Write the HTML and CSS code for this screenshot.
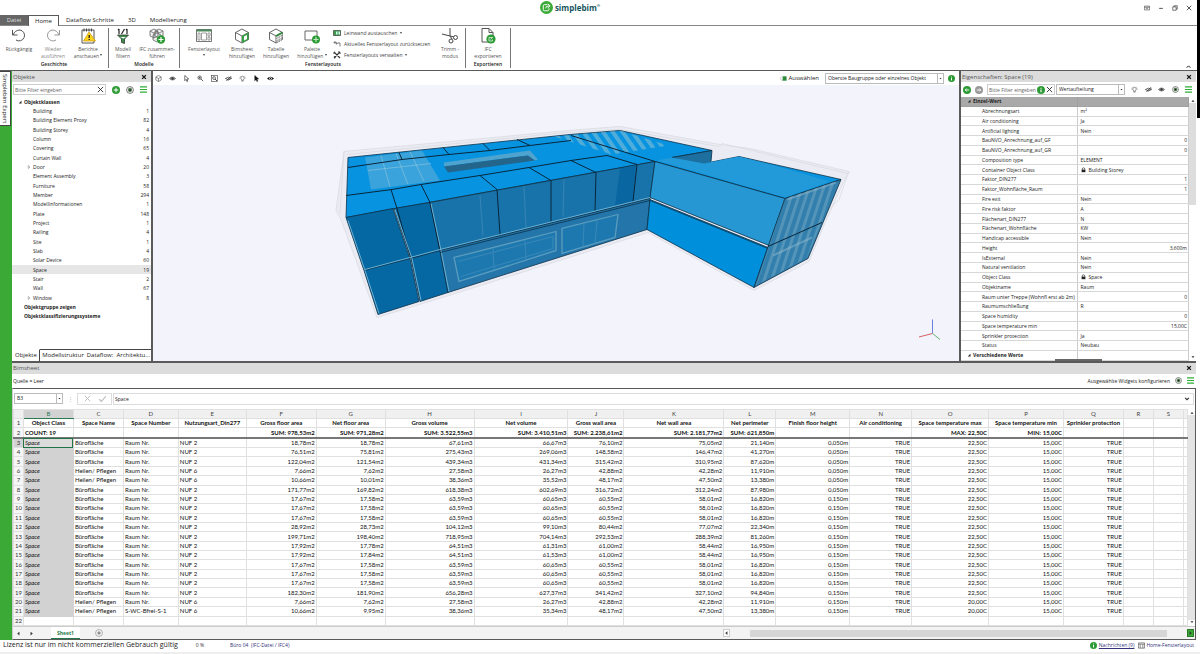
FILE: index.html
```html
<!DOCTYPE html>
<html lang="de">
<head>
<meta charset="utf-8">
<title>simplebim</title>
<link rel="stylesheet" href="styles.css">
</head>
<body>
<svg class="sprite" width="0" height="0" aria-hidden="true">
  <symbol id="i-eye" viewBox="0 0 16 16"><path d="M1 8Q8 1 15 8Q8 15 1 8Z" fill="#999" stroke="#555" stroke-width="1.5"/><circle cx="8" cy="8" r="2.6" fill="#333"/></symbol>
  <symbol id="i-eyeblack" viewBox="0 0 16 16"><path d="M0 8Q8 0 16 8Q8 16 0 8Z" fill="#111"/><circle cx="8" cy="8" r="3" fill="#fff"/><circle cx="8" cy="8" r="1.6" fill="#111"/></symbol>
  <symbol id="i-eyeoff" viewBox="0 0 16 16"><path d="M1 8Q8 2 15 8Q8 14 1 8ZM3 13L13 3M6 13L15 4" fill="none" stroke="#444" stroke-width="1.8"/></symbol>
  <symbol id="i-bulb" viewBox="0 0 16 16"><path d="M5.500 10a4 4 0 1 1 5 0v2h-5zM6 14h4M1 7h1.500M13.500 7H15M2.500 2l1.500 1.500M13.500 2L12 3.500" fill="none" stroke="#555" stroke-width="1.5"/></symbol>
  <symbol id="i-target" viewBox="0 0 16 16"><circle cx="8" cy="8" r="6.800" fill="#fff" stroke="#444" stroke-width="1.400"/><circle cx="8" cy="8" r="4.300" fill="#5d855d"/><circle cx="8" cy="8" r="1.700" fill="#111"/></symbol>
  <symbol id="i-menu" viewBox="0 0 16 16"><path d="M0 2h16M0 8h16M0 14h16" stroke="#2fae35" stroke-width="2.600"/></symbol>
  <symbol id="i-plus" viewBox="0 0 16 16"><circle cx="8" cy="8" r="8" fill="#2d9b35"/><path d="M8 3.500v9M3.500 8h9" stroke="#fff" stroke-width="2"/></symbol>
  <symbol id="i-info" viewBox="0 0 16 16"><circle cx="8" cy="8" r="8" fill="#2d9b35"/><path d="M8 7v5.500M8 3.500v2" stroke="#fff" stroke-width="2.200"/></symbol>
  <symbol id="i-x" viewBox="0 0 16 16"><path d="M2 2L14 14M14 2L2 14" stroke="currentColor" stroke-width="2" fill="none"/></symbol>
  <symbol id="i-xbold" viewBox="0 0 16 16"><path d="M3 3L13 13M13 3L3 13" stroke="#111" stroke-width="3.500" fill="none"/></symbol>
  <symbol id="i-down" viewBox="0 0 16 16"><path d="M2 5h12L8 12Z" fill="#333"/></symbol>
  <symbol id="i-up" viewBox="0 0 16 16"><path d="M2 11h12L8 4Z" fill="#222"/></symbol>
  <symbol id="i-left" viewBox="0 0 16 16"><path d="M11 2v12L4 8Z" fill="#333"/></symbol>
  <symbol id="i-right" viewBox="0 0 16 16"><path d="M5 2v12l7-6Z" fill="#333"/></symbol>
  <symbol id="i-cursor" viewBox="0 0 16 16"><path d="M4 1v12l3-3 2 5 2-1-2-5h4z" fill="#fff" stroke="#333" stroke-width="1.500"/></symbol>
  <symbol id="i-cursorblack" viewBox="0 0 16 16"><path d="M4 1v12l3-3 2 5 2-1-2-5h4z" fill="#111" stroke="#111"/></symbol>
  <symbol id="i-cube" viewBox="0 0 16 16"><path d="M8 1l6 3.500v7L8 15l-6-3.500v-7zM2 4.500l6 3.500 6-3.500M8 8v7" fill="#fff" stroke="#444" stroke-width="1.300"/></symbol>
  <symbol id="i-lens" viewBox="0 0 16 16"><circle cx="6" cy="6" r="4" fill="#eee" stroke="#444" stroke-width="1.600"/><path d="M4 6h4M6 4v4M9 9l5 5" stroke="#444" stroke-width="2"/></symbol>
  <symbol id="i-lensbox" viewBox="0 0 16 16"><rect x="1" y="1" width="14" height="14" fill="none" stroke="#444" stroke-width="1.400"/><circle cx="7" cy="7" r="3.300" fill="#eee" stroke="#444" stroke-width="1.600"/><path d="M9 9l5 5" stroke="#444" stroke-width="2.200"/></symbol>
  <symbol id="i-lock" viewBox="0 0 16 16"><path d="M4 8V5a4 4 0 0 1 8 0v3" fill="none" stroke="#222" stroke-width="2"/><rect x="2" y="7" width="12" height="8" fill="#222"/></symbol>
  <symbol id="i-fold" viewBox="0 0 16 16"><path d="M14 3v11H3z" fill="#222"/></symbol>
  <symbol id="i-unfold" viewBox="0 0 16 16"><path d="M5 2l7 6-7 6z" fill="#fff" stroke="#777" stroke-width="2"/></symbol>
  <symbol id="i-logo" viewBox="0 0 16 16"><circle cx="8" cy="8" r="8" fill="#3aa935"/><path d="M9 4.500H5.500Q4 4.500 4 6v4.500Q4 12 5.500 12h4Q11 12 11 10.500V9M7 9q0-3 4-3M9.500 3.500L12.500 6l-3 2.500" fill="none" stroke="#fff" stroke-width="1.200"/></symbol>
</svg>

<div class="app">
  <header class="titlebar">
    <div class="brand"><svg class="brand-mark"><use href="#i-logo"/></svg><span>simplebim<sup>®</sup></span></div>
    <div class="winctl">
      <button aria-label="Menüband"><svg viewBox="0 0 16 16"><path d="M1 3h14v10H1zM1 6h14M8 7.500v4M6 9.500l2-2 2 2" fill="none" stroke="#333" stroke-width="1.500"/></svg></button>
      <button aria-label="Minimieren"><svg viewBox="0 0 16 16"><path d="M3 9h10" stroke="#222" stroke-width="2"/></svg></button>
      <button aria-label="Verkleinern"><svg viewBox="0 0 16 16"><path d="M2 5h9v9H2zM5 5V2h9v9h-3" fill="none" stroke="#222" stroke-width="1.600"/></svg></button>
      <button aria-label="Schließen"><svg viewBox="0 0 16 16"><use href="#i-x"/></svg></button>
    </div>
  </header>

  <nav class="tabs">
    <button class="tab file">Datei</button>
    <button class="tab active">Home</button>
    <button class="tab">Dataflow Schritte</button>
    <button class="tab">3D</button>
    <button class="tab">Modellierung</button>
  </nav>

  <div class="ribbon">
    <section class="group">
      <div class="tools">
        <button class="tool w36"><svg viewBox="0 0 16 16"><path d="M1.500 2v5h5M2 7Q4 2 9 2a5.500 5.500 0 1 1-4 10" fill="none" stroke="#555"/></svg><span>Rückgängig</span></button>
        <button class="tool w32 off"><svg viewBox="0 0 16 16"><path d="M14.500 2v5h-5M14 7Q12 2 7 2a5.500 5.500 0 1 0 4 10" fill="none" stroke="#999"/></svg><span>Wieder<br>ausführen</span></button>
        <button class="tool w38"><svg viewBox="0 0 16 16"><path d="M2 2h12v13H2z" fill="#fff" stroke="#555"/><path d="M4 .5v3M6.500 .5v3M9 .5v3M11.500 .5v3M4 12h4" stroke="#444"/><path d="M9 4l6.500 9h-12z" fill="#ffd21f" stroke="#c89a00" stroke-width=".7"/><path d="M9.200 7v3M9.200 11v1" stroke="#222" stroke-width="1.300"/></svg><span>Berichte<br>anschauen <i class="caret"></i></span></button>
      </div>
      <h2>Geschichte</h2>
    </section>
    <section class="group">
      <div class="tools">
        <button class="tool w26"><svg viewBox="0 0 16 16"><path d="M2.500 7h11L9.500 11v4.500l-3-1V11z" fill="#3c8f4a" stroke="#333" stroke-width=".8"/><path d="M5 9h6L8.500 10.500z" fill="#fff"/><path d="M4 1v5M6.500 6l3-5M12 1v5M3 2l1-1M11 2l1-1" stroke="#222" stroke-width="1.200" fill="none"/></svg><span>Modell<br>filtern</span></button>
        <button class="tool w42"><svg viewBox="0 0 16 16"><path d="M5 1l4 2v5L5 10 1 8V3zM1 3l4 2 4-2M5 5v5M10 1l4 2v5l-4 2-4-2V3zM6 3l4 2 4-2M8 5l4 2v5l-4 2-4-2V7z" fill="#eee" stroke="#666" stroke-width=".8"/><circle cx="12" cy="11.500" r="4.200" fill="#2d9b35"/><path d="M12 9v5M9.500 11.500h5" stroke="#fff" stroke-width="1.200"/></svg><span>IFC zusammen-<br>führen</span></button>
      </div>
      <h2>Modelle</h2>
    </section>
    <section class="group wide">
      <div class="tools">
        <button class="tool w42"><svg viewBox="0 0 16 16"><path d="M.5 1.500h15v12H.5z" fill="#fff" stroke="#777"/><path d="M.5 1.500h15v2H.5z" fill="#4d8a5d"/><path d="M2 5h2v7H2zM5.500 5h5v7h-5zM12 5h2v3h-2zM12 9h2v3h-2z" fill="#fff" stroke="#888" stroke-width=".8"/></svg><span>Fensterlayout<br><i class="caret"></i></span></button>
        <button class="tool w34"><svg viewBox="0 0 16 16"><path d="M8 1l6.500 3.500v7L8 15l-6.500-3.500v-7zM1.500 4.500L8 8l6.500-3.500M8 8v7" fill="#fff" stroke="#555" stroke-width=".9"/><path d="M8 8l6.500-3.500v7L8 15z" fill="#35a043"/><path d="M10 8.500l3-1.500v4l-3 1.500z" fill="#fff"/></svg><span>Bimsheet<br>hinzufügen</span></button>
        <button class="tool w34"><svg viewBox="0 0 16 16"><path d="M8 1l6.500 3.500v7L8 15l-6.500-3.500v-7zM1.500 4.500L8 8l6.500-3.500M8 8v7" fill="#fff" stroke="#555" stroke-width=".9"/><path d="M8 8l6.500-3.500v7L8 15z" fill="#999"/><path d="M8 9.500L14.500 6M10 8v6M12.300 7v6M8 12l6.500-3.500" stroke="#fff" stroke-width=".7"/><path d="M8 8l6.500-3.500" stroke="#2d8a3a" stroke-width="1.600"/></svg><span>Tabelle<br>hinzufügen</span></button>
        <button class="tool w38"><svg viewBox="0 0 16 16"><path d="M1 3h12v9H1z" fill="#fff" stroke="#666"/><circle cx="12" cy="11.500" r="4" fill="#2d9b35"/><path d="M12 9v5M9.500 11.500h5" stroke="#bfe6c2" stroke-width="1.200"/></svg><span>Palette<br>hinzufügen <i class="caret"></i></span></button>
        <div class="stack">
          <button><svg viewBox="0 0 16 16"><path d="M1 3h14v10H1z" fill="#3d9b4a" stroke="#444" stroke-width="1.500"/><path d="M6 5h3v6H6zM11 5h3v6h-3z" fill="#cfe" /></svg>Leinwand austauschen <i class="caret"></i></button>
          <button><svg viewBox="0 0 16 16"><path d="M5 2L2 5l3 3M2 5h5v4M10 5l-2 3M10 6h4v7" fill="none" stroke="#555" stroke-width="1.500"/></svg>Aktuelles Fensterlayout zurücksetzen</button>
          <button><svg viewBox="0 0 16 16"><path d="M2 2l12 12M14 2L2 14M1 5l3-3M11 1l4 4M2 11l3 3" stroke="#333" stroke-width="2.200"/></svg>Fensterlayouts verwalten <i class="caret"></i></button>
        </div>
        <button class="tool w26"><svg viewBox="0 0 16 16"><path d="M8 0v8l2 3M0 6l12 3" stroke="#444" fill="none"/><circle cx="13.500" cy="9.500" r="2" fill="#fff" stroke="#444"/><circle cx="9" cy="13" r="2" fill="#fff" stroke="#444"/></svg><span>Trimm -<br>modus</span></button>
      </div>
      <h2>Fensterlayouts</h2>
    </section>
    <section class="group">
      <div class="tools">
        <button class="tool w42"><svg viewBox="0 0 16 16"><path d="M2 .5h7l4 4V14H2z" fill="#fff" stroke="#555"/><path d="M9 .5v4h4" fill="none" stroke="#555"/><circle cx="11" cy="11" r="4.600" fill="#2d9b35"/><path d="M12 9.500H9v3.500h3.500v-1.500M10.500 11.500l2.500-2.500" stroke="#cfe8d0" stroke-width=".9" fill="none"/></svg><span>IFC<br>exportieren</span></button>
      </div>
      <h2>Exportieren</h2>
    </section>
    <button class="collapse" aria-label="Menüband einklappen"><svg viewBox="0 0 16 16"><path d="M2 12l6-6 6 6" fill="none" stroke="#111" stroke-width="3"/></svg></button>
  </div>

  <div class="work">
    <aside class="rail"><button>Simplebim Expert</button></aside>
    <div class="panes">
      <div class="upper">
        <section class="panel objects">
          <div class="caption"><span>Objekte</span><button aria-label="Objekte schließen"><svg><use href="#i-xbold"/></svg></button></div>
          <div class="filterbar">
            <div class="field"><input aria-label="Filter" placeholder="Bitte Filter eingeben"><svg class="ic"><use href="#i-x"/></svg></div>
            <svg class="ic big"><use href="#i-plus"/></svg><svg class="ic big"><use href="#i-target"/></svg><svg class="ic"><use href="#i-menu"/></svg>
          </div>
          <ul class="tree" id="tree"></ul>
          <div class="subtabs"><button class="on">Objekte</button><button>Modellstruktur</button><button>Dataflow:</button><button>Architektu...</button></div>
        </section>

        <section class="viewer">
          <div class="viewbar">
            <div class="viewtools">
              <svg class="ic"><use href="#i-cube"/></svg><svg class="ic"><use href="#i-eye"/></svg><svg class="ic"><use href="#i-cursor"/></svg><svg class="ic"><use href="#i-lens"/></svg><svg class="ic"><use href="#i-lensbox"/></svg><svg class="ic"><use href="#i-eyeoff"/></svg><svg class="ic"><use href="#i-bulb"/></svg><svg class="ic"><use href="#i-cursorblack"/></svg><svg class="ic"><use href="#i-eyeblack"/></svg>
            </div>
            <label class="pick" for="level"><svg class="ic" viewBox="0 0 16 16"><path d="M5 4a4 4 0 0 0 0 8h3" fill="none" stroke="#999"/><rect x="6" y="3" width="9" height="10" fill="#2d8a3a"/></svg>Auswählen</label>
            <div class="combo level"><select id="level"><option>Oberste Baugruppe oder einzelnes Objekt</option></select><svg><use href="#i-down"/></svg></div>
            <svg class="ic"><use href="#i-info"/></svg>
          </div>
          <svg class="scene" viewBox="153 86 806 275" role="img" aria-label="Gebäudemodell">
            <defs>
              <pattern id="stripes" width="7" height="10" patternUnits="userSpaceOnUse" patternTransform="rotate(18)"><rect width="3" height="10" fill="#86b4c8" opacity=".4"/></pattern>
              <pattern id="slats" width="8" height="10" patternUnits="userSpaceOnUse" patternTransform="rotate(-35)"><rect width="4" height="10" fill="#a9cdd6" opacity=".45"/></pattern>
            </defs>
            <g fill="#e4e4ea" fill-opacity=".5" stroke="#d8d8de" stroke-width=".7">
              <path d="M344 152L568 131 620 127 720 145 750 149 849 172 842 186 823 228 809 262 754 291 648 233 449 296 377 318 341 220 336 211Z"/>
              <path d="M347 155L566 133 620 130 719 147 722 144 848 174" fill="none"/>
              <path d="M344 152L340 214M849 172L839 200 825 214" fill="none"/>
            </g>
            <g stroke="#0b3048" stroke-width=".8" stroke-linejoin="round">
              <path fill="#0793df" d="M346 218L348 158 570 135 620 131 712 151 672 158 704 164 739 157 841 180 785 199 655 162Z"/>
              <path fill="#1d6f9f" stroke="none" d="M672 158L712 151 711 163 704 165Z"/>
              <path fill="none" d="M672 158L712 151 711 162"/>
              <path fill="#229ad9" stroke="none" d="M657 161L672 158 704 164 739 157 785 169 830 182 785 198Z"/>
              <path fill="#0568a3" d="M346 218L393 209 410 259 364 271Z"/>
              <path fill="#0568a3" d="M394 209L430 203 440 251 411 259Z"/>
              <path fill="#0568a3" d="M364 271L410 259 419 302 378 315Z"/>
              <path fill="#0568a3" d="M411 259L440 251 448 293 420 302Z"/>
              <path fill="#1873aa" d="M430 203L655 162 650 199 440 251Z"/>
              <path fill="#2375aa" d="M440 251L650 199 647 230 448 293Z"/>
              <path fill="#0a66a0" stroke="none" d="M620 169L636 166 633 202 615 206Z"/>
              <path fill="#2697d2" d="M655 162L785 199 769 246 650 198Z"/>
              <path fill="#008fdb" d="M650 200L768 248 754 288 647 230Z"/>
              <path fill="#327fad" d="M785 199L841 180 808 259 754 288 768 247Z"/>
            </g>
            <path fill="url(#stripes)" d="M785 199L839 181 807 258 756 286 769 247Z"/>
            <g fill="none" stroke="#a5c6d4" stroke-opacity=".4" stroke-width="2"><path d="M787 200L836 183M773 256L812 238"/></g>
            <path fill="#6fb4d8" fill-opacity=".5" d="M365 158L422 151 440 181 371 190Z"/>
            <g fill="none" stroke="#9fcde0" stroke-opacity=".5" stroke-width="1"><path d="M381 156L390 187M396 154L408 185M410 152L424 182M368 171L431 164"/></g>
            <path fill="url(#slats)" d="M554 137L620 131 668 146 612 155Z"/>
            <path fill="#4ea4cf" d="M444 163L530 151 538 160 530 162 528 156 444 167Z"/>
            <path fill="#24658c" d="M444 167L528 156 535 161 448 173Z"/>
            <g fill="none" stroke="#08263c" stroke-width="1">
              <path d="M348 168L402 160 449 155 490 151 530 146 571 141M346 196L392 190 421 185 480 176 529 168 571 161 607 156"/>
              <path d="M399 153L402 160M443 148L449 155M483 144L490 151M517 140L530 146M571 136L655 162"/>
              <path d="M391 190L397 209 411 259M421 185L430 203 440 251M480 176L497 190M529 168L551 181M571 161L596 173M607 156L637 165"/>
              <path d="M497 190L500 235M551 181L551 222M596 173L595 211M637 165L633 202M768 247L822 223"/>
            </g>
            <g fill="none" stroke="#6ab0d2" stroke-width="1">
              <path d="M348 221L365 271 379 314M365 270L440 250 650 198M395 210L412 259 421 301M431 204L441 251 449 292"/>
            </g>
            <path d="M440 253L650 201 768 249" fill="none" stroke="#0b3048" stroke-width=".8"/>
            <g fill="#1d78b0" stroke="#5a9cbe" stroke-width="1.300">
              <path d="M454 258L556 232 556 251 459 282Z"/><path d="M562 229L618 215 615 238 562 254Z"/>
            </g>
            <g fill="none" stroke="#5a9cc0" stroke-opacity=".4" stroke-width="1.200"><path d="M458 262L553 237 553 249 461 277M493 249L494 270M525 241L526 260M584 224L583 247M597 221L595 244M480 196L483 236M524 187L526 228M564 180L563 217"/></g>
            <path d="M932.500 320V334" stroke="#6a7fe0"/><path d="M932.500 334L919 337.500" stroke="#d46060"/><path d="M932.500 334L940 340" stroke="#5fb86c"/>
          </svg>
        </section>

        <section class="panel props">
          <div class="caption"><span>Eigenschaften: Space (19)</span><button aria-label="Eigenschaften schließen"><svg><use href="#i-xbold"/></svg></button></div>
          <div class="filterbar">
            <svg class="ic big" viewBox="0 0 16 16"><circle cx="8" cy="8" r="8" fill="#2d9b35"/><path d="M12.500 8h-8M7.500 5L4.500 8l3 3" fill="none" stroke="#fff" stroke-width="1.800"/></svg>
            <svg class="ic big" viewBox="0 0 16 16"><circle cx="8" cy="8" r="8" fill="#999"/><path d="M3.500 8h8M8.500 5l3 3-3 3" fill="none" stroke="#fff" stroke-width="1.800"/></svg>
            <div class="field"><input aria-label="Filter" placeholder="Bitte Filter eingeben"><svg class="ic big"><use href="#i-info"/></svg><svg class="ic"><use href="#i-x"/></svg></div>
            <div class="combo"><select aria-label="Ansicht"><option>Wertaufteilung</option></select><svg><use href="#i-down"/></svg></div>
            <div class="icons"><svg class="ic"><use href="#i-bulb"/></svg><svg class="ic"><use href="#i-eyeoff"/></svg><svg class="ic"><use href="#i-eye"/></svg><svg class="ic"><use href="#i-target"/></svg><svg class="ic"><use href="#i-menu"/></svg></div>
          </div>
          <div class="propbody">
            <table class="proptable"><colgroup><col class="pname"><col></colgroup><tbody id="props"></tbody></table>
            <div class="vscroll"><svg><use href="#i-up"/></svg><i class="thumb"></i><svg><use href="#i-down"/></svg></div>
          </div>
          <i class="grip"></i>
        </section>
      </div>

      <section class="bimsheet">
        <div class="caption"><span>Bimsheet</span><button aria-label="Bimsheet schließen"><svg><use href="#i-xbold"/></svg></button></div>
        <div class="source"><span>Quelle = Leer</span><span class="config">Ausgewählte Widgets konfigurieren</span><svg class="ic"><use href="#i-target"/></svg><svg class="ic"><use href="#i-menu"/></svg></div>
        <div class="book">
          <div class="formula">
            <div class="combo cellname"><select aria-label="Zelle"><option>B3</option></select><svg><use href="#i-down"/></svg></div>
            <span class="dots">⋮</span>
            <div class="okcancel"><svg viewBox="0 0 16 16"><path d="M3 3l10 10M13 3L3 13" stroke="#bbb" stroke-width="1.600"/></svg><svg viewBox="0 0 16 16"><path d="M2 9l4 4 8-9" fill="none" stroke="#bbb" stroke-width="2"/></svg></div>
            <div class="fx"><input aria-label="Formel" value="Space"><svg viewBox="0 0 16 16"><path d="M3 5l5 5 5-5" fill="none" stroke="#333" stroke-width="3"/></svg></div>
          </div>
          <div class="gridwrap">
            <table class="grid" id="grid"></table>
            <div class="vscroll"><svg><use href="#i-up"/></svg><i class="thumb"></i><svg><use href="#i-down"/></svg></div>
          </div>
          <div class="sheetbar">
            <svg class="arr"><use href="#i-left"/></svg><svg class="arr"><use href="#i-right"/></svg>
            <button class="sheet">Sheet1</button>
            <button class="add" aria-label="Neues Blatt"><svg viewBox="0 0 16 16"><circle cx="8" cy="8" r="7" fill="none" stroke="#777"/><path d="M8 4.500v7M4.500 8h7" stroke="#666" stroke-width="1.800"/></svg></button>
            <div class="hscroll"><svg><use href="#i-left"/></svg><i></i><svg class="end"><use href="#i-right"/></svg></div>
          </div>
        </div>
      </section>
    </div>
  </div>

  <footer class="status">
    <span class="licence">Lizenz ist nur im nicht kommerziellen Gebrauch gültig</span>
    <span class="pct">0 %</span>
    <span class="file">Büro 04&nbsp; (IFC-Datei / IFC4)</span>
    <svg class="ic"><use href="#i-info"/></svg><a href="#">Nachrichten (9)</a>
    <svg class="ic lay" viewBox="0 0 16 16"><path d="M1 2h14v12H1zM1 5h14M5 5v9M11 5v9" fill="none" stroke="#555" stroke-width="1.500"/></svg><span class="file">Home-Fensterlayout</span>
  </footer>
  <i class="edge"></i>
</div>
<script src="app.js"></script>
</body>
</html>
```

FILE: styles.css
```css
:root {
  --ui: "Open Sans", "Noto Sans", sans-serif;
  --sheet: Lato, "Open Sans", sans-serif;
  --line: #5a5a5a;
  --green: #3aa935;
  --cap: #dcdcdc;
}
* { box-sizing: border-box; }
body { margin: 0; background: #fff; color: #222; font: 5px/8px var(--ui); }
button, input, select { font: inherit; color: inherit; border: 0; margin: 0; padding: 0; background: none; border-radius: 0; }
input, select { outline: 0; min-width: 0; width: 100%; }
select { appearance: none; }
svg { display: block; flex: none; }
h2 { margin: 0; font: 600 5px/8px var(--ui); color: #222; text-align: center; }
.sprite { position: absolute; }
.ic { width: 7px; height: 7px; }
.ic.big { width: 8px; height: 8px; }
.app { min-height: 100vh; display: flex; flex-direction: column; position: relative; }
.edge { position: absolute; top: 0; right: 0; width: 3px; height: 118px; background: #000; }

.titlebar { height: 15px; display: grid; grid-template-columns: 9fr auto 10fr; align-items: center; }
.brand { grid-column: 2; display: flex; align-items: center; gap: 2px; font: 700 8px/12px var(--ui); color: #14535c; }
.brand-mark { width: 13px; height: 13px; }
.brand sup { font-size: 4px; line-height: 1px; vertical-align: 4px; }
.winctl { display: flex; justify-content: flex-end; gap: 8px; padding-right: 8px; }
.winctl svg { width: 6px; height: 6px; }

.tabs { height: 11px; display: flex; font-size: 6px; border-bottom: 1px solid #888; }
.tab { padding: 0 7px; line-height: 9px; }
.tab.file { background: #666; color: #ddd; width: 28px; padding: 0; }
.tab.active { background: #fff; border: 1px solid var(--line); border-bottom: 0; width: 31px; padding: 0; margin-bottom: -1px; }

.ribbon { height: 45px; display: flex; border-bottom: 1px solid var(--line); position: relative; padding-top: 2px; }
.group { border-right: 1px solid #777; margin-bottom: 2px; padding: 0 1px; display: flex; flex-direction: column; }
.group.wide { padding: 0 2px 0 3px; }
.tools { display: flex; flex: 1; }
.tool { display: flex; flex-direction: column; align-items: center; gap: 2px; color: #555; line-height: 7px; white-space: nowrap; }
.tool svg { width: 16px; height: 16px; }
.tool.off { color: #888; }
.w26 { width: 26px; }
.w32 { width: 32px; }
.w34 { width: 34px; }
.w36 { width: 36px; }
.w38 { width: 38px; }
.w42 { width: 42px; }
.caret { display: inline-block; border: 1px solid transparent; border-top: 2px solid #444; vertical-align: 1px; }
.stack { display: flex; flex-direction: column; gap: 3px; padding: 1px 2px 0; width: 106px; color: #444; }
.stack button { display: flex; align-items: center; gap: 3px; white-space: nowrap; }
.stack svg { width: 8px; height: 8px; }
.collapse { position: absolute; right: 9px; bottom: 1px; }
.collapse svg { width: 5px; height: 5px; }

.work { flex: 1; display: flex; }
.rail { width: 12px; background: var(--green); flex: none; }
.rail button { writing-mode: vertical-rl; width: 11px; height: 55px; background: #fff; border: 1px solid #444; border-left: 0; font-size: 6px; }
.panes { flex: 1; min-width: 0; display: flex; flex-direction: column; margin-right: 4px; }
.upper { flex: 291 1 0; display: flex; border-bottom: 2px solid var(--line); }
.caption { height: 11px; flex: none; background: var(--cap); display: flex; align-items: center; justify-content: space-between; padding: 0 4px 0 1px; font-size: 6px; color: #555; }
.caption svg { width: 6px; height: 6px; }
.panel { display: flex; flex-direction: column; flex: none; position: relative; }
.filterbar { height: 15px; flex: none; display: flex; align-items: center; gap: 6px; padding: 0 4px 0 1px; }
.field { border: 1px solid #ccc; height: 11px; display: flex; align-items: center; padding: 0 1px; gap: 1px; flex: 1; }
.field input::placeholder { color: #666; opacity: 1; }
.combo { display: flex; align-items: center; border: 1px solid #bbb; height: 11px; background: #fff; }
.combo select { flex: 1; padding-left: 2px; height: 9px; line-height: 9px; }
.combo svg { width: 6px; height: 9px; padding: 3px 1px; border-left: 1px solid #bbb; }

.objects { width: 141px; border-right: 2px solid var(--line); }
.tree { list-style: none; margin: 0; padding: 0; flex: 1; display: grid; grid-template-rows: repeat(27, 1fr); }
.tree li { display: flex; align-items: center; padding: 0 2px 0 15px; line-height: 8px; }
.tree svg, .tree i { width: 4px; height: 4px; margin-right: 2px; flex: none; }
.tree .count { margin-left: auto; }
.tree li.top { font-weight: 700; padding-left: 6px; }
.tree li.sel { background: #e6e6e6; }
.subtabs { height: 12px; display: flex; font-size: 6px; flex: none; }
.subtabs button { border-top: 1px solid #444; padding: 0 2px; white-space: nowrap; min-width: 0; }
.subtabs .on { border-top-color: #fff; border-right: 1px solid #444; padding: 0 3px; }

.viewer { flex: 1; min-width: 0; display: flex; flex-direction: column; background: #f3f3fc; }
.viewbar { height: 14px; flex: none; background: #fff; display: flex; align-items: center; padding: 0 4px 0 2px; gap: 4px; }
.viewtools { flex: 1; display: flex; gap: 7px; }
.pick { display: flex; align-items: center; gap: 1px; font-size: 6px; }
.level { width: 119px; margin-left: 2px; }
.scene { flex: 1; width: 100%; min-height: 0; }

.props { width: 237px; border-left: 2px solid var(--line); }
.props .filterbar { gap: 4px; padding-left: 2px; }
.props .field { flex: none; width: 68px; }
.props .combo { width: 69px; margin-left: -3px; }
.props .icons { flex: 1; display: flex; justify-content: space-between; padding-left: 2px; }
.propbody { flex: 1; display: grid; grid-template-columns: 1fr 7px; }
.proptable { border-collapse: collapse; table-layout: fixed; width: 100%; height: 100%; }
.pname { width: 51%; }
.proptable th, .proptable td { padding: 0 1px 0 3px; border-bottom: 1px solid #d8d8d8; border-right: 1px solid #ccc; text-align: left; font-weight: 400; line-height: 8px; white-space: nowrap; }
.proptable th { padding-left: 21px; }
.proptable .sect th { font-weight: 700; padding-left: 6px; }
.proptable .dark > * { background: #a9a9a9; border-color: #a0a0a0; }
.proptable .num { text-align: right; }
.proptable svg { display: inline-block; width: 5px; height: 6px; margin-right: 3px; vertical-align: -1px; }
.proptable .sect svg { width: 4px; height: 4px; margin-right: 2px; vertical-align: 0; }
.vscroll { background: #fff; display: flex; flex-direction: column; align-items: center; justify-content: space-between; padding: 2px 0; }
.vscroll svg { width: 4px; height: 4px; }
.vscroll .thumb { width: 100%; background: #ddd; flex: 1; }
.props .thumb { flex: none; height: 102px; margin-bottom: auto; }
.grip { position: absolute; bottom: 0; left: 94px; width: 47px; height: 2px; background: #666; }

.bimsheet { flex: 278 1 0; display: flex; flex-direction: column; }
.source { height: 14px; flex: none; display: flex; align-items: center; gap: 5px; padding: 0 2px 0 1px; }
.config { margin-left: auto; }
.book { flex: 1; display: flex; flex-direction: column; border: 1px solid var(--line); border-left-color: #ccc; }
.formula { flex: none; display: flex; align-items: center; height: 20px; padding: 0 1px; }
.cellname { width: 49px; }
.dots { width: 14px; text-align: center; color: #aaa; }
.okcancel { display: flex; gap: 6px; border: 1px solid #ddd; height: 12px; width: 35px; padding: 0 5px; align-items: center; }
.okcancel svg { width: 9px; height: 9px; }
.fx { flex: 1; display: flex; align-items: center; border: 1px solid #ddd; height: 12px; margin-left: 1px; padding: 0 3px 0 1px; }
.fx svg { width: 6px; height: 6px; }
.gridwrap { flex: 1; display: grid; grid-template-columns: 1fr 7px; }
.grid { border-collapse: collapse; table-layout: fixed; width: 100%; height: 100%; font: 6px/8px var(--sheet); color: #111; }
.grid th, .grid td { padding: 0 1px; border: 1px solid #e0e0e0; white-space: nowrap; overflow: hidden; text-align: left; font-weight: 400; }
.grid thead th { background: #f0f0f0; text-align: center; color: #444; }
.grid tbody th { text-align: center; color: #333; background: #f6f6f6; padding: 0; }
.grid .title td { font-weight: 700; text-align: center; overflow: visible; }
.grid .sum td { font-weight: 700; }
.grid .sum > * { border-bottom: 2px solid #777; }
.grid td.num { text-align: right; }
.grid .col-b { background: #d2d2d2; border-color: #d2d2d2; font-style: italic; }
.grid thead .picked { background: #d2d2d2; color: #2a7a52; border-bottom: 1px solid #2a7a52; }
.grid tbody th.picked { background: #d2d2d2; }
.grid td.cell { outline: 1px solid #217346; outline-offset: -1px; background: #dcdcdc; }
.gridwrap .thumb { background: #e4e4e4; }
.sheetbar { height: 13px; flex: none; display: flex; align-items: center; background: #f3f3f3; border-top: 1px solid #ccc; padding: 0 1px 0 3px; }
.arr { width: 5px; height: 5px; margin-right: 8px; }
.sheet { background: #fff; color: #1f7a48; font-weight: 700; width: 29px; height: 100%; border-bottom: 1px solid #1f7a48; margin: 0 15px 0 9px; }
.add svg { width: 8px; height: 8px; }
.hscroll { margin-left: auto; width: 40%; display: flex; align-items: center; gap: 20px; height: 8px; }
.hscroll svg { width: 7px; height: 8px; background: #fff; border: 1px solid #ccc; }
.hscroll i { flex: 1; height: 7px; background: #d6d6d6; }
.hscroll .end { background: var(--green); border-color: #2a7a2a; }

.status { height: 14px; flex: none; display: flex; align-items: center; padding: 0 6px 2px 3px; border-bottom: 2px solid #eee; color: #333; }
.licence { font-size: 7px; color: #222; }
.pct { margin-left: 18px; }
.status .file { color: #33337a; }
.pct + .file { margin-left: 26px; margin-right: auto; }
.status a { color: #33337a; margin: 0 4px 0 2px; }
.status .lay { margin-right: 1px; }
```

FILE: app.js
```js
const icon = name => `<svg><use href="#i-${name}"/></svg>`;

const tree = [
  ["Building", 1], ["Building Element Proxy", 82], ["Building Storey", 4], ["Column", 16],
  ["Covering", 65], ["Curtain Wall", 4], ["Door", 20, "kids"], ["Element Assembly", 3],
  ["Furniture", 58], ["Member", 294], ["Modellinformationen", 1], ["Plate", 148],
  ["Project", 1], ["Railing", 4], ["Site", 1], ["Slab", 4], ["Solar Device", 60],
  ["Space", 19, "sel"], ["Stair", 2], ["Wall", 67], ["Window", 8, "kids"]
];
document.getElementById("tree").innerHTML =
  `<li class="top">${icon("fold")}Objektklassen</li>` +
  tree.map(([name, count, kind]) =>
    `<li class="${kind || ""}">${kind === "kids" ? icon("unfold") : "<i></i>"}<span>${name}</span><span class="count">${count}</span></li>`).join("") +
  '<li class="top"><i></i>Objektgruppe zeigen</li><li class="top"><i></i>Objektklassifizierungssysteme</li>';

const lock = icon("lock");
const props = [
  ["Abrechnungsart", "m²"], ["Air conditioning", "Ja"], ["Artificial lighting", "Nein"],
  ["BauNVO_Anrechnung_auf_GF", "0", 1], ["BauNVO_Anrechnung_auf_GR", "0", 1],
  ["Composition type", "ELEMENT"], ["Container Object Class", lock + "Building Storey"],
  ["Faktor_DIN277", "1", 1], ["Faktor_Wohnfläche_Raum", "1", 1], ["Fire exit", "Nein"],
  ["Fire risk faktor", "A"], ["Flächenart_DIN277", "N"], ["Flächenart_Wohnfläche", "KW"],
  ["Handicap accessible", "Nein"], ["Height", "3,600m", 1], ["IsExternal", "Nein"],
  ["Natural ventilation", "Nein"], ["Object Class", lock + "Space"], ["Objektname", "Raum"],
  ["Raum unter Treppe (Wohnfl erst ab 2m)", "0", 1], ["Raumumschließung", "R"],
  ["Space humidity", "0", 1], ["Space temperature min", "15,00C", 1],
  ["Sprinkler protection", "Ja"], ["Status", "Neubau"]
];
document.getElementById("props").innerHTML =
  `<tr class="sect dark"><th>${icon("fold")}Einzel-Wert</th><td></td></tr>` +
  props.map(([n, v, num]) => `<tr><th>${n}</th><td class="${num ? "num" : ""}">${v}</td></tr>`).join("") +
  `<tr class="sect"><th>${icon("fold")}Verschiedene Werte</th><td></td></tr>`;

const widths = [10, 50, 50, 55, 68, 70, 69, 89, 94, 56, 100, 52, 74, 62, 77, 75, 60, 30, 30, 4];
const letters = " BCDEFGHIJKLMNOPQRS ".replace("G", "").replace("F", "FG").split("");
const titles = ["Object Class", "Space Name", "Space Number", "Nutzungsart_Din277", "Gross floor area", "Net floor area", "Gross volume", "Net volume", "Gross wall area", "Net wall area", "Net perimeter", "Finish floor height", "Air conditioning", "Space temperature max", "Space temperature min", "Sprinkler protection", "", "", ""];
const sums = ["COUNT: 19", "", "", "", "SUM: 978,53m2", "SUM: 971,28m2", "SUM: 3.522,55m3", "SUM: 3.410,51m3", "SUM: 2.238,61m2", "SUM: 2.181,77m2", "SUM: 621,850m", "", "", "MAX: 22,50C", "MIN: 15,00C", "", "", "", ""];
const small = "17,67 17,58 63,59 60,65 60,55 58,01 16,820 0,150";
const measures = [
  "18,78 18,78 67,61 66,67 76,10 75,05 21,140 0,050",
  "76,51 75,81 275,43 269,06 148,58 146,47 41,270 0,050",
  "122,04 121,54 439,34 431,34 315,42 310,95 87,620 0,050",
  "7,66 7,62 27,58 26,27 42,88 42,28 11,910 0,050",
  "10,66 10,01 38,36 35,52 48,17 47,50 13,380 0,050",
  "171,77 169,82 618,38 602,69 316,72 312,24 87,980 0,050",
  small, small, small,
  "28,92 28,73 104,12 99,10 80,44 77,07 22,340 0,150",
  "199,71 198,40 718,95 704,14 292,53 288,39 81,260 0,150",
  "17,92 17,78 64,51 61,31 61,00 58,44 16,950 0,150",
  "17,92 17,84 64,51 61,53 61,00 58,44 16,950 0,150",
  small, small, small,
  "182,30 181,90 656,28 627,37 341,42 327,10 94,840 0,150",
  "7,66 7,62 27,58 26,27 42,88 42,28 11,910 0,150",
  "10,66 9,95 38,36 35,34 48,17 47,50 13,380 0,150"
];
const units = ["m2", "m2", "m3", "m3", "m2", "m2", "m", "m"];
const care = [6, 7, 20, 21];
const rows = measures.map((line, i) => {
  const n = i + 3, nuf6 = care.includes(n);
  return ["Space", nuf6 ? "Heilen/ Pflegen" : "Bürofläche", n === 21 ? "S-WC-Bfrei-S-1" : "Raum Nr.", nuf6 ? "NUF 6" : "NUF 2",
    ...line.split(" ").map((v, k) => v + units[k]), "TRUE", n >= 20 ? "20,00C" : "22,50C", "15,00C", "TRUE", "", "", ""];
});
const cells = (list, isData) => list.map((v, k) => {
  const cls = k > 3 ? "num" : isData && k === 0 ? "col-b" : "";
  return `<td class="${cls}">${v}</td>`;
}).join("");
document.getElementById("grid").innerHTML =
  "<colgroup>" + widths.map(w => `<col style="width:${w / 11.75}%">`).join("") + "</colgroup>" +
  "<thead><tr>" + letters.map(l => `<th class="${l === "B" ? "picked" : ""}">${l}</th>`).join("") + "</tr></thead><tbody>" +
  `<tr class="title"><th>1</th>${titles.map(t => `<td>${t}</td>`).join("")}</tr>` +
  `<tr class="sum"><th>2</th>${cells(sums)}</tr>` +
  rows.map((r, i) => `<tr><th class="${i ? "" : "picked"}">${i + 3}</th>${cells(r, true)}</tr>`).join("") +
  `<tr><th>22</th>${cells(Array(19).fill(""))}</tr></tbody>`;
document.querySelector(".col-b").classList.add("cell");
```
